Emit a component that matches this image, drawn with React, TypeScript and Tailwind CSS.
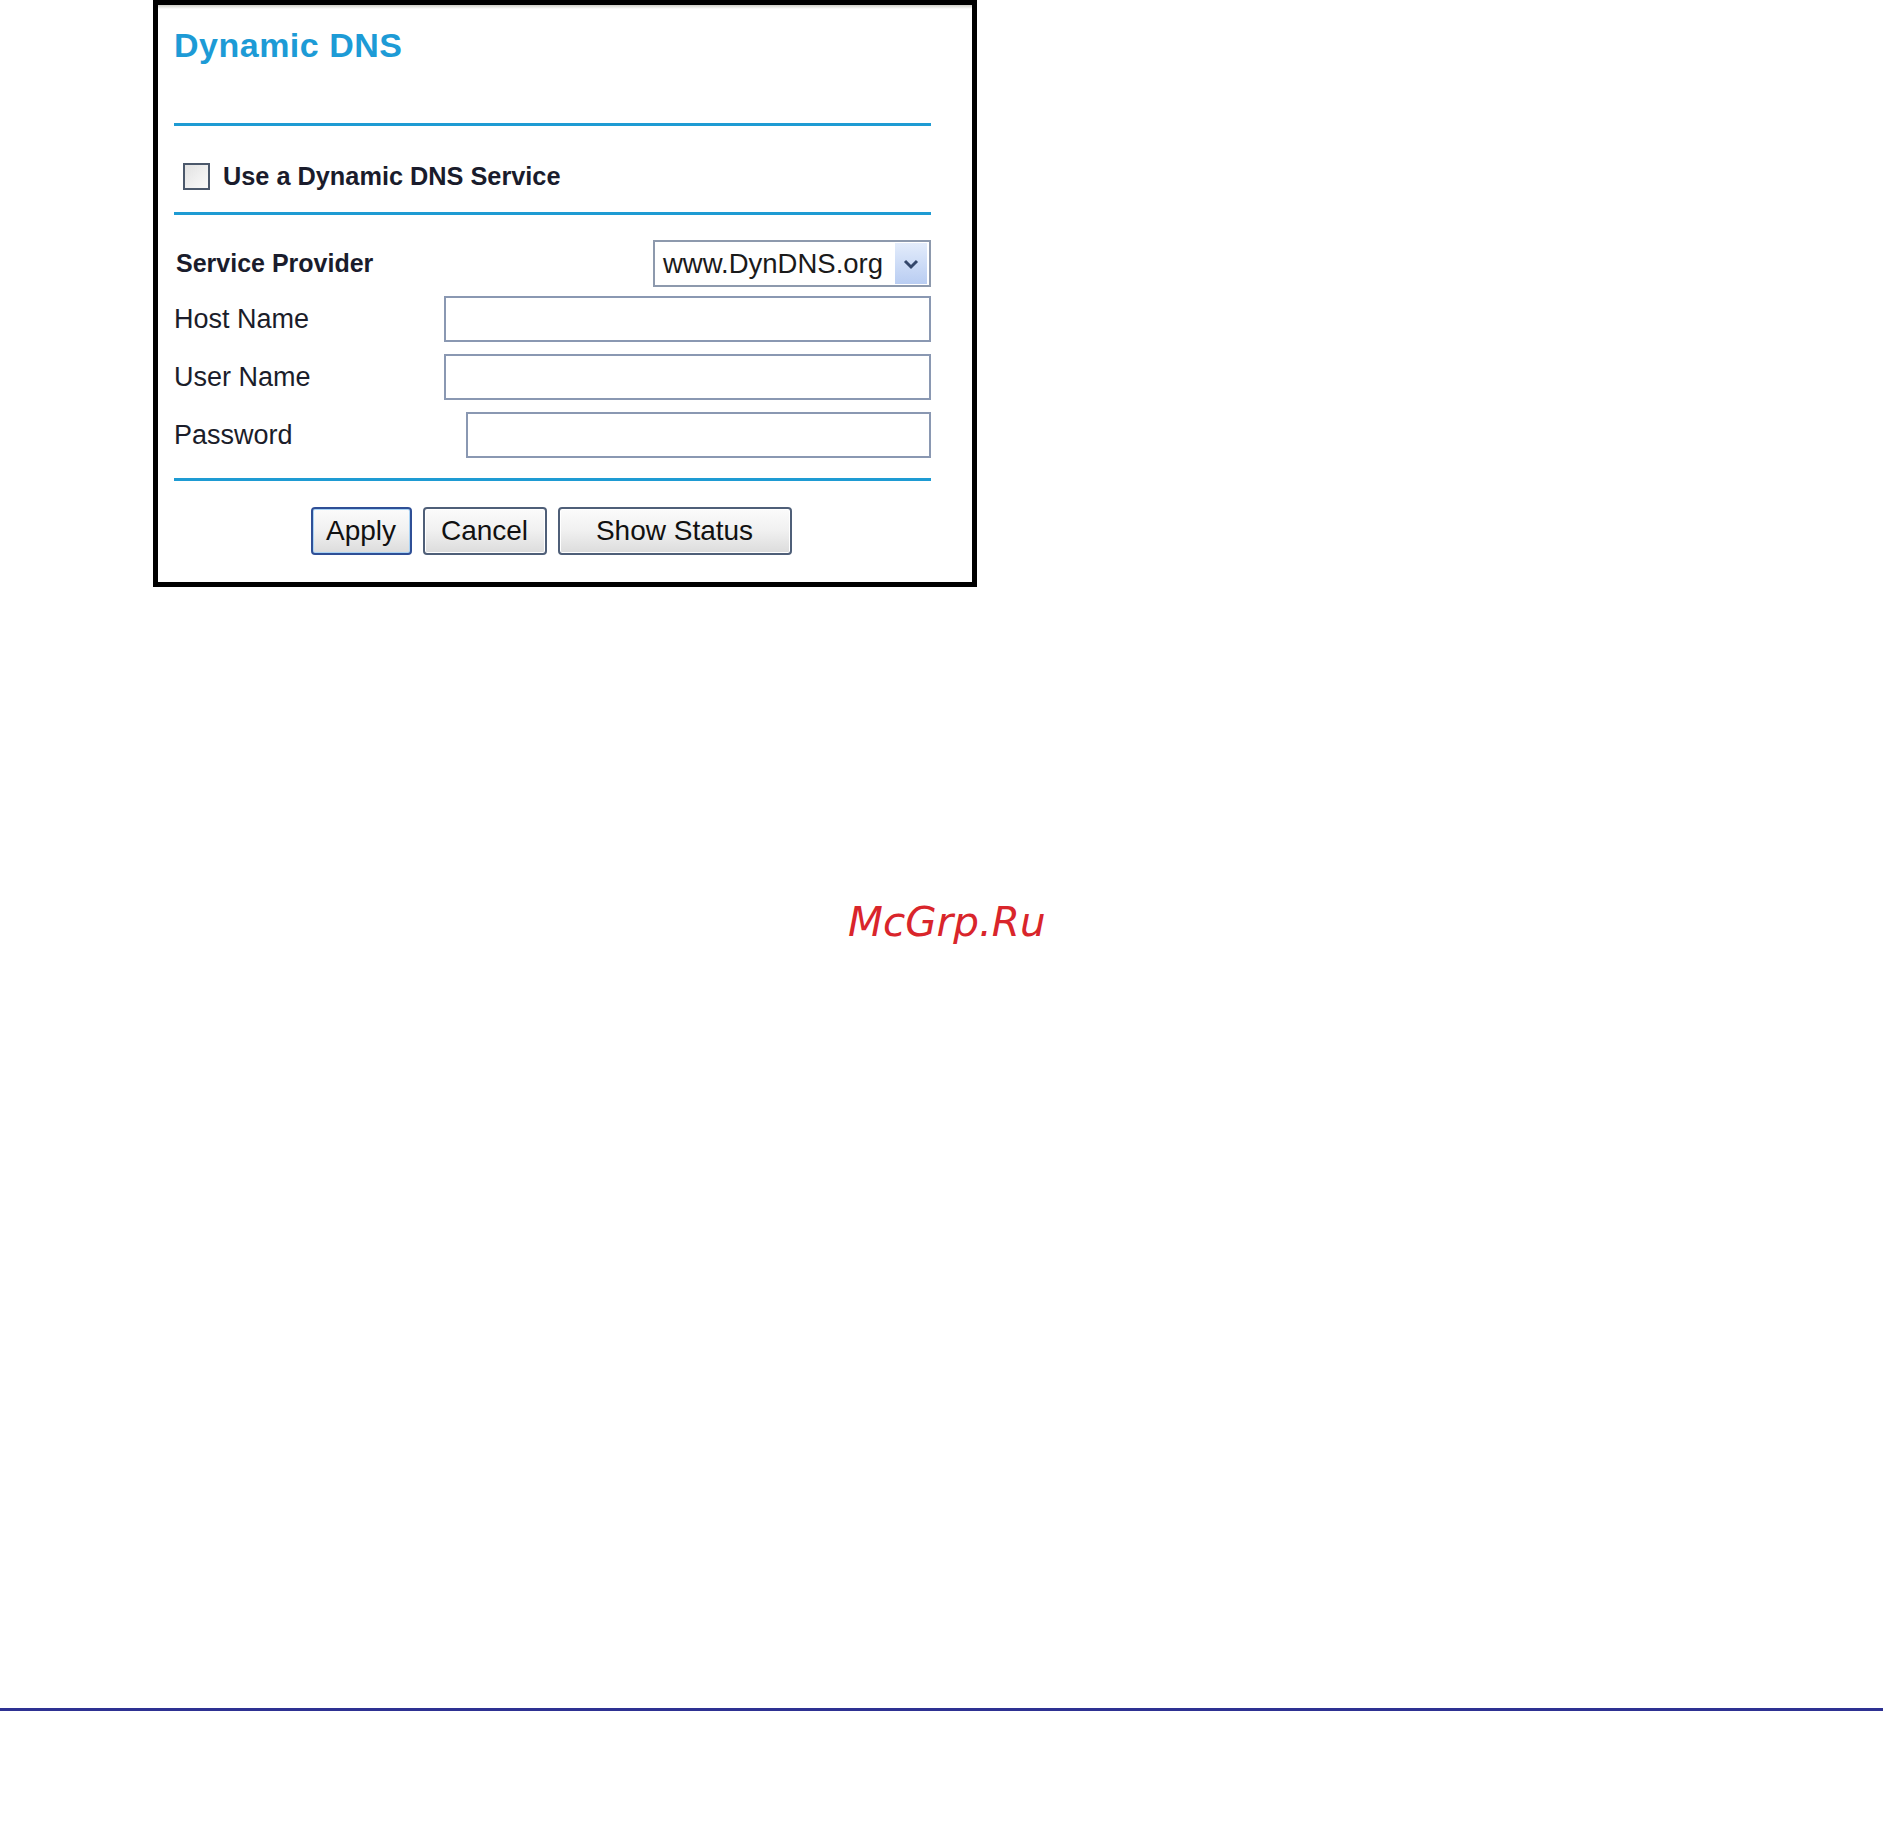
import React from "react";

const sans = { fontFamily: '"Liberation Sans", Arial, sans-serif' } as const;

function Rule() {
  return <div className="h-[3px] w-full bg-[#1e9bd3]" />;
}

function Field({ label, indent = 0 }: { label: string; indent?: number }) {
  return (
    <div className="flex h-[46px] items-center">
      <div className="w-[270px] text-[27px] leading-[27px] text-[#1b1d2a]">{label}</div>
      <div className={indent ? "flex-1 pl-[22px] h-full" : "flex-1 h-full"}>
        <input
          type="text"
          className="h-full w-full border-[2px] border-[#8a98b2] bg-white outline-none"
        />
      </div>
    </div>
  );
}

function Btn({ label, w, primary }: { label: string; w: string; primary?: boolean }) {
  return (
    <button
      className={
        (primary
          ? "border-[#2f4f96] shadow-[inset_0_0_0_1px_#a9d3f5] "
          : "border-[#4f5f78] shadow-[inset_0_0_0_1px_#ffffff] ") +
        w +
        " h-[48px] rounded-[4px] border-[2px] bg-gradient-to-b from-[#fbfbfb] via-[#f0f0f0] to-[#dcdcdc] text-[28px] leading-[28px] text-[#111]"
      }
      style={sans}
    >
      {label}
    </button>
  );
}

export default function App() {
  return (
    <div className="relative h-[1843px] w-full bg-white" style={sans}>
      {/* Settings panel */}
      <div className="ml-[153px] h-[587px] w-[824px] border-[5px] border-black bg-white">
        <div className="h-[4px] bg-gradient-to-b from-[#cfcfc8] to-white" />
        <div className="pl-[16px] pr-[41px]">
          <div className="mt-[19px] h-[34px] text-[34px] font-bold leading-[34px] text-[#1d9bd6] tracking-[0.5px]">
            Dynamic DNS
          </div>

          <div className="mt-[61px]">
            <Rule />
          </div>

          <div className="mt-[32px] flex h-[36px] items-center">
            <div className="ml-[9px] h-[27px] w-[27px] border-[2px] border-[#4b586b] bg-gradient-to-br from-[#e2e2e2] to-[#fafafa]" />
            <span className="ml-[13px] text-[25.3px] font-bold leading-[25px] text-[#1a1c2c]">
              Use a Dynamic DNS Service
            </span>
          </div>

          <div className="mt-[18px]">
            <Rule />
          </div>

          <div className="mt-[25px] flex h-[47px] items-center justify-between">
            <div className="pl-[2px] text-[25px] font-bold leading-[25px] text-[#1a1c2c]">Service Provider</div>
            <div className="flex h-full w-[278px] items-center border-[2px] border-[#8d99ad] bg-white pl-[8px] pr-[2px]">
              <span className="flex-1 text-[27.5px] leading-[27px] text-[#1a1a1a]">www.DynDNS.org</span>
              <div className="flex h-[41px] w-[32px] items-center justify-center bg-gradient-to-b from-[#e3ecfb] to-[#b9cdf2]">
                <svg width="16" height="12" viewBox="0 0 16 12">
                  <path d="M2 3 L8 9 L14 3" fill="none" stroke="#34476b" strokeWidth="3" />
                </svg>
              </div>
            </div>
          </div>

          <div className="mt-[9px]">
            <Field label="Host Name" />
          </div>
          <div className="mt-[12px]">
            <Field label="User Name" />
          </div>
          <div className="mt-[12px]">
            <Field label="Password" indent={1} />
          </div>

          <div className="mt-[20px]">
            <Rule />
          </div>

          <div className="mt-[26px] flex justify-center gap-[11px] pr-[3px]">
            <Btn label="Apply" w="w-[101px]" primary />
            <Btn label="Cancel" w="w-[124px]" />
            <Btn label="Show Status" w="w-[234px]" />
          </div>
        </div>
      </div>

      {/* Site mark */}
      <div className="mt-[315px] pl-[848px]">
        <span
          className="text-[40.5px] italic leading-[40px] text-[#d9252b]"
          style={{ fontFamily: '"DejaVu Sans", sans-serif' }}
        >
          McGrp.Ru
        </span>
      </div>

      {/* Footer rule */}
      <div className="mt-[765px] h-[3px] w-full bg-[#2e3192]" />
    </div>
  );
}
